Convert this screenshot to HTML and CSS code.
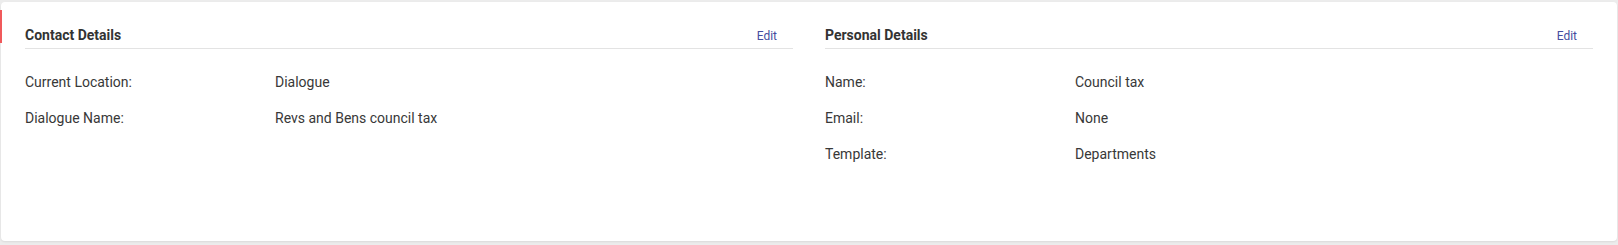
FILE: index.html
```html
<!DOCTYPE html>
<html lang="en">
<head>
    <meta http-equiv="Content-Type" content="text/html; charset=UTF-8">
    <meta name="viewport" content="width=device-width, initial-scale=1.0">
    <title>Details</title>
    <link rel="stylesheet" href="styles.css">
</head>
<body>
    <div class="marker"></div>
    <div class="card">
        <div class="panel">
            <div class="panel-head">
                <span class="panel-title">Contact Details</span>
                <a class="edit" href="#">Edit</a>
            </div>
            <div class="rows">
                <div class="row"><span class="label">Current Location:</span><span class="value">Dialogue</span></div>
                <div class="row"><span class="label">Dialogue Name:</span><span class="value">Revs and Bens council tax</span></div>
            </div>
        </div>
        <div class="panel">
            <div class="panel-head">
                <span class="panel-title">Personal Details</span>
                <a class="edit" href="#">Edit</a>
            </div>
            <div class="rows">
                <div class="row"><span class="label">Name:</span><span class="value">Council tax</span></div>
                <div class="row"><span class="label">Email:</span><span class="value">None</span></div>
                <div class="row"><span class="label">Template:</span><span class="value">Departments</span></div>
            </div>
        </div>
    </div>
</body>
</html>
```

FILE: styles.css
```css
html, body {
    margin: 0;
    padding: 0;
}
body {
    background-color: #ececec;
    font-family: Roboto, "Liberation Sans", sans-serif;
    color: #383838;
    padding: 2px 1px 4px 1px;
    height: 245px;
    box-sizing: border-box;
    position: relative;
}
.marker {
    position: absolute;
    left: 0;
    top: 10px;
    width: 2px;
    height: 33px;
    background-color: #f0595b;
}
.card {
    background-color: #ffffff;
    border-radius: 4px;
    box-shadow: 0 1px 2px rgba(0, 0, 0, 0.08);
    height: 239px;
    box-sizing: border-box;
    padding: 23px 24px 0 24px;
    display: grid;
    grid-template-columns: 1fr 1fr;
    column-gap: 32px;
    align-items: start;
}
.panel-head {
    display: flex;
    justify-content: space-between;
    align-items: baseline;
    padding-bottom: 2px;
    border-bottom: 1px solid #e3e3e3;
    line-height: 20px;
}
.panel-title {
    font-size: 14px;
    font-weight: bold;
    color: #333333;
}
.edit {
    font-size: 12px;
    color: #454d9e;
    text-decoration: none;
    margin-right: 16px;
}
.rows {
    display: flex;
    flex-direction: column;
    gap: 16px;
    margin-top: 23px;
}
.row {
    display: flex;
    font-size: 14px;
    line-height: 20px;
}
.label {
    width: 250px;
    flex-shrink: 0;
}
```
